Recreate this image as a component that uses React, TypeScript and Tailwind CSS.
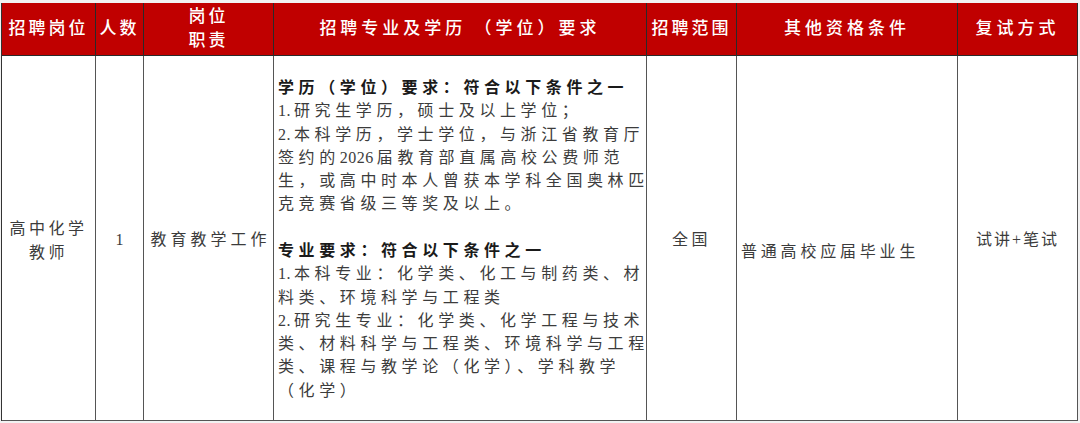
import React from "react";

const FONT = '"Liberation Serif", "Noto Sans CJK SC", serif';

const req1 = [
  { t: "学历（学位）要求：符合以下条件之一", b: true },
  { t: "1.研究生学历，硕士及以上学位；" },
  { t: "2.本科学历，学士学位，与浙江省教育厅" },
  { t: "签约的2026届教育部直属高校公费师范" },
  { t: "生，或高中时本人曾获本学科全国奥林匹" },
  { t: "克竞赛省级三等奖及以上。" },
  { t: "\u00a0" },
  { t: "专业要求：符合以下条件之一", b: true },
  { t: "1.本科专业：化学类、化工与制药类、材" },
  { t: "料类、环境科学与工程类" },
  { t: "2.研究生专业：化学类、化学工程与技术" },
  { t: "类、材料科学与工程类、环境科学与工程" },
  { t: "类、课程与教学论（化学）、学科教学" },
  { t: "（化学）" },
];

function Line({ t }: { t: string }) {
  const parts = t.split(/([0-9.]+)/);
  return (
    <>
      {parts.map((p, i) =>
        /^[0-9.]+$/.test(p) ? (
          <span key={i} className="tracking-[0.5px] mr-[3px]">
            {p}
          </span>
        ) : (
          <span key={i}>{p}</span>
        )
      )}
    </>
  );
}

export default function App() {
  const head =
    "bg-[#c00000] h-[53px] border-r border-b border-[#2a2a2a] flex flex-col items-center justify-center text-white text-[17px] font-medium tracking-[3px] leading-[24px]";
  const body =
    "h-[365px] border-r border-b border-[#555] text-[#3c3c3c] text-[16px] leading-[23.3px] flex";
  return (
    <div
      className="w-[1080px] h-[423px] bg-[#f2f2f2] pt-[3px] overflow-hidden"
      style={{ fontFamily: FONT }}
    >
      <div className="ml-[1px] w-[1077px] bg-white border-l border-[#333] grid grid-cols-[94px_48px_130px_373px_90px_221px_120px]">
        <div className={head}>招聘岗位</div>
        <div className={head + " tracking-[1px]"}>人数</div>
        <div className={head}>
          <span>岗位</span>
          <span>职责</span>
        </div>
        <div className={head + " tracking-[4px]"}>招聘专业及学历 （学位）要求</div>
        <div className={head}>招聘范围</div>
        <div className={head + " tracking-[4px]"}>其他资格条件</div>
        <div className={head + " tracking-[4px]"}>复试方式</div>

        <div className={body + " flex-col items-center justify-center tracking-[3.5px] pt-[5px]"}>
          <span>高中化学</span>
          <span>教师</span>
        </div>
        <div className={body + " items-center justify-center pt-[4px]"}>1</div>
        <div className={body + " items-center justify-center tracking-[4px] pt-[4px] pl-[4px]"}>
          教育教学工作
        </div>
        <div className={body + " flex-col justify-center pl-[4px] pt-[2px] tracking-[4.6px]"}>
          {req1.map((l, i) => (
            <div
              key={i}
              className={
                "whitespace-nowrap " +
                (l.b ? "font-bold text-[#1a1a1a]" : "")
              }
            >
              <Line t={l.t} />
            </div>
          ))}
        </div>
        <div className={body + " items-center justify-center tracking-[3.5px] pt-[4px]"}>
          全国
        </div>
        <div className={body + " items-center pl-[4px] pt-[28px] tracking-[3.8px]"}>
          普通高校应届毕业生
        </div>
        <div className={body + " items-center justify-center tracking-[2px] pt-[4px]"}>
          试讲+笔试
        </div>
      </div>
    </div>
  );
}
